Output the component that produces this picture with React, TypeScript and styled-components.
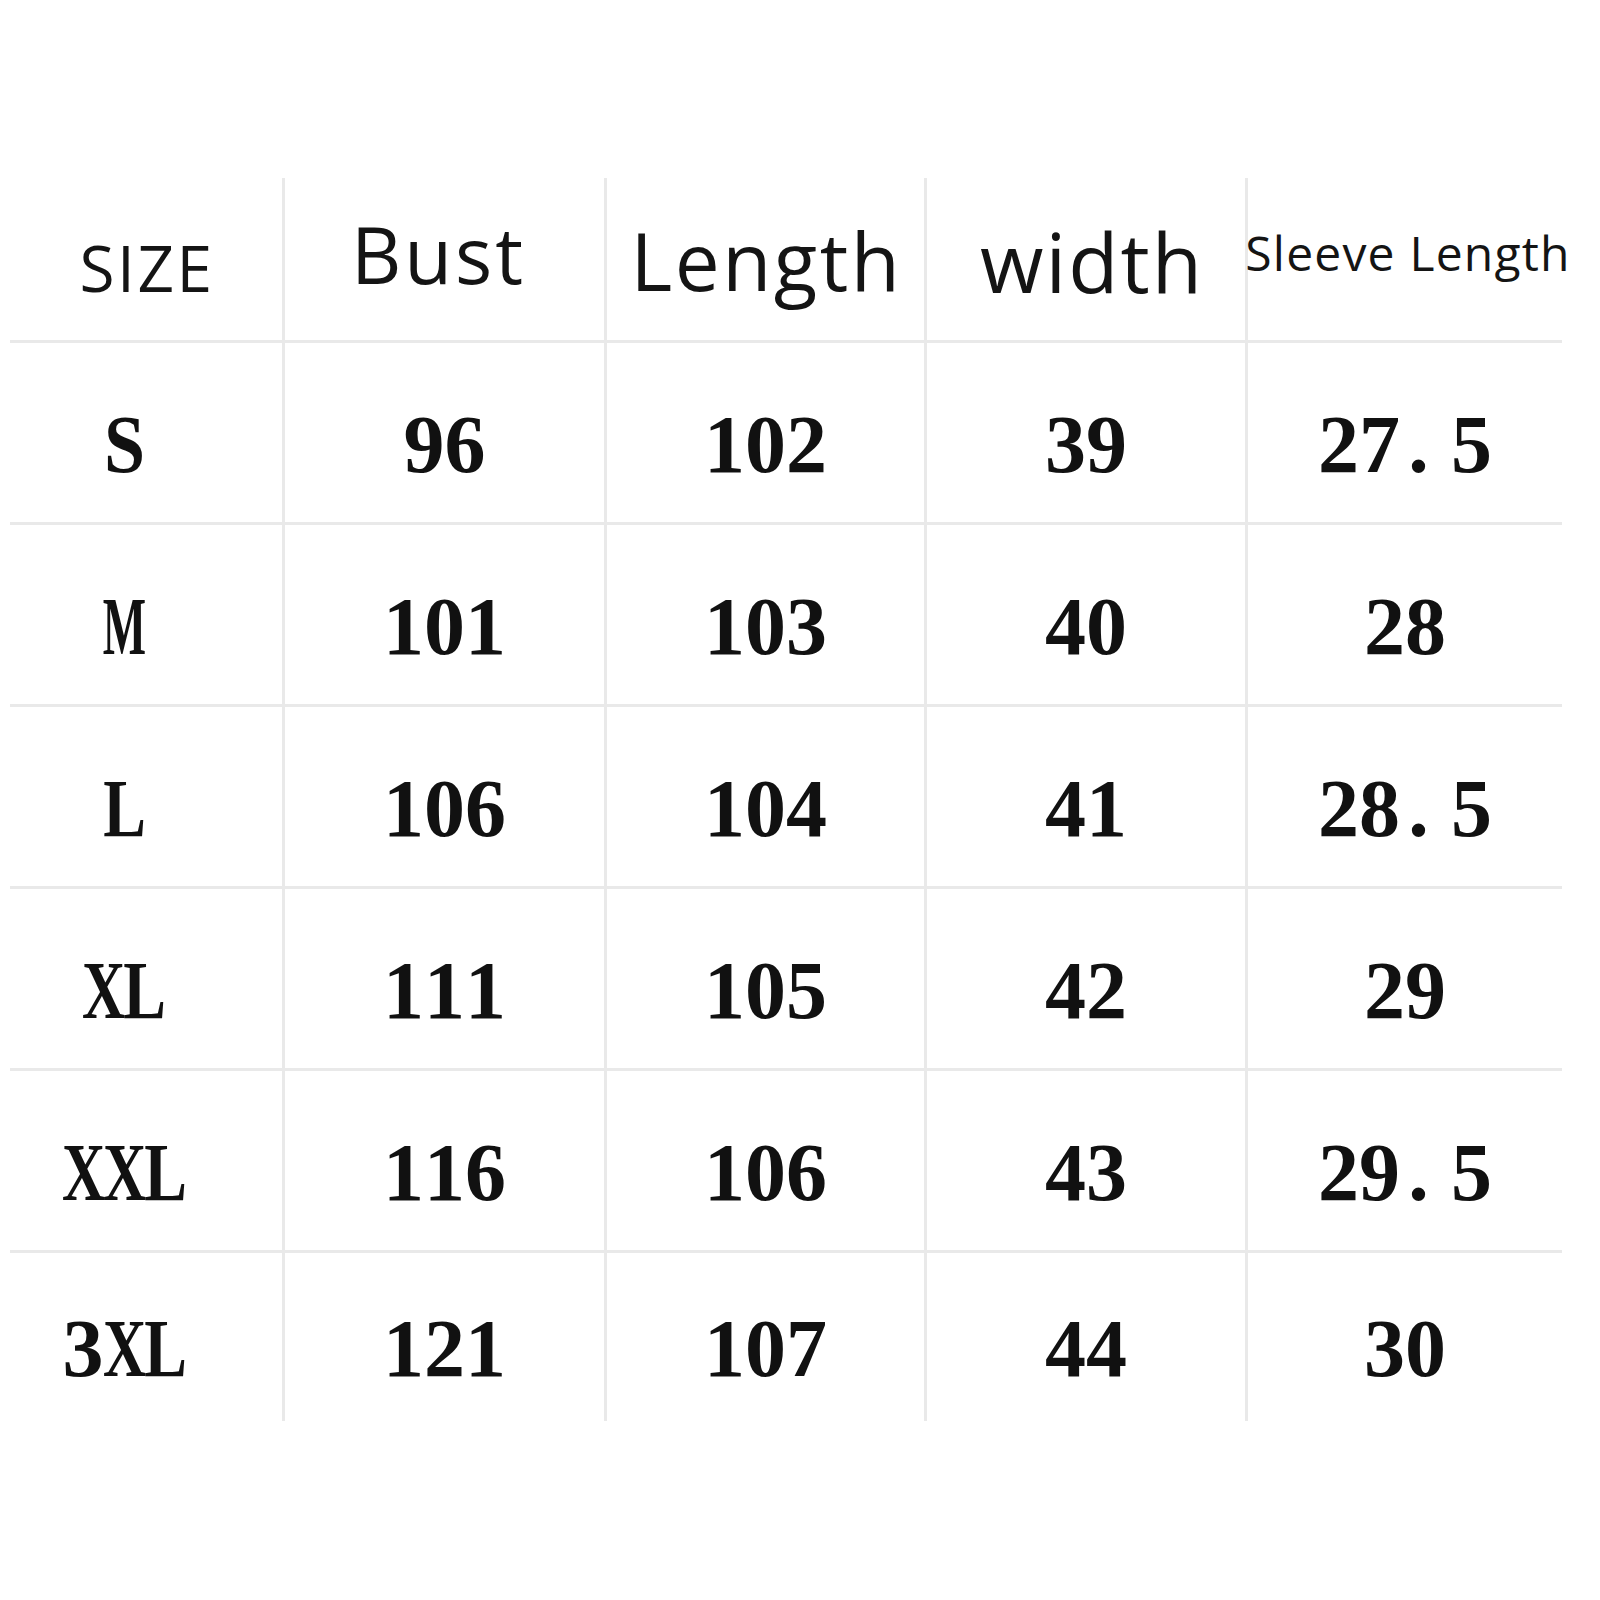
import styled, { createGlobalStyle } from 'styled-components';

const GlobalStyle = createGlobalStyle`
  html, body {
    margin: 0;
    padding: 0;
    background: #ffffff;
  }
`;

const Page = styled.div`
  width: 1600px;
  min-height: 1600px;
  padding-top: 178px;
  padding-left: 10px;
  box-sizing: border-box;
  background: #ffffff;
`;

const Grid = styled.div`
  display: grid;
  grid-template-columns: 275px 322px 320px 321px 314px;
  grid-template-rows: 165px repeat(5, 182px) 168px;
  width: 1552px;
`;

const Cell = styled.div<{ $lastCol: boolean; $lastRow: boolean }>`
  display: flex;
  align-items: center;
  justify-content: center;
  box-sizing: border-box;
  min-width: 0;
  border-right: ${(p) => (p.$lastCol ? 'none' : '3px solid #e9e9e9')};
  border-bottom: ${(p) => (p.$lastRow ? 'none' : '3px solid #e9e9e9')};
`;

// shift: vertical nudge (px, + = down), nudge: horizontal nudge (px, + = right)
const HeadCell = styled(Cell)<{ $size: number; $shift: number; $nudge: number; $spacing: number }>`
  font-family: "Open Sans", "Noto Sans", sans-serif;
  font-size: ${(p) => p.$size}px;
  letter-spacing: ${(p) => p.$spacing}px;
  color: #141414;
  white-space: nowrap;
  padding-top: ${(p) => (p.$shift > 0 ? p.$shift * 2 : 0)}px;
  padding-bottom: ${(p) => (p.$shift < 0 ? -p.$shift * 2 : 0)}px;
  padding-left: ${(p) => (p.$nudge > 0 ? p.$nudge * 2 : 0)}px;
  padding-right: ${(p) => (p.$nudge < 0 ? -p.$nudge * 2 : 0)}px;
`;

const DataCell = styled(Cell)<{ $first: boolean }>`
  font-family: "Liberation Serif", "Times New Roman", serif;
  font-weight: 700;
  font-size: 82px;
  color: #111111;
  padding-top: 24px;
  padding-right: ${(p) => (p.$first ? 44 : 0)}px;
`;

// every character sits in a half-em box, like the half-width glyphs of the original
const Glyph = styled.span<{ $squeeze: number; $dot: boolean }>`
  display: inline-flex;
  justify-content: ${(p) => (p.$dot ? 'flex-start' : 'center')};
  box-sizing: border-box;
  width: ${(p) => (p.$dot ? 0.62 : 0.5)}em;
  padding-left: ${(p) => (p.$dot ? 0.1 : 0)}em;
  transform: scaleX(${(p) => p.$squeeze});
`;

const squeeze: Record<string, number> = { M: 0.56, X: 0.73, L: 0.78, S: 0.9 };

function MonoText({ text }: { text: string }) {
  return (
    <>
      {text.split('').map((ch, i) => (
        <Glyph key={i} $squeeze={squeeze[ch] ?? 1} $dot={ch === '.'}>{ch}</Glyph>
      ))}
    </>
  );
}

const headers = [
  { label: 'SIZE', size: 64, shift: 8, nudge: 1, spacing: 2.4 },
  { label: 'Bust', size: 78, shift: -5, nudge: -6, spacing: 3 },
  { label: 'Length', size: 80, shift: 0, nudge: 1, spacing: 2.5 },
  { label: 'width', size: 82, shift: 2, nudge: 6, spacing: 2 },
  { label: 'Sleeve Length', size: 48, shift: -7, nudge: 3, spacing: 1.2 },
];

const rows = [
  ['S', '96', '102', '39', '27.5'],
  ['M', '101', '103', '40', '28'],
  ['L', '106', '104', '41', '28.5'],
  ['XL', '111', '105', '42', '29'],
  ['XXL', '116', '106', '43', '29.5'],
  ['3XL', '121', '107', '44', '30'],
];

export default function App() {
  return (
    <>
      <GlobalStyle />
      <Page>
        <Grid>
          {headers.map((h, c) => (
            <HeadCell
              key={h.label}
              $lastCol={c === 4}
              $lastRow={false}
              $size={h.size}
              $shift={h.shift}
              $nudge={h.nudge}
              $spacing={h.spacing}
            >
              {h.label}
            </HeadCell>
          ))}
          {rows.map((row, r) =>
            row.map((val, c) => (
              <DataCell key={`${r}-${c}`} $lastCol={c === 4} $lastRow={r === rows.length - 1} $first={c === 0}>
                <MonoText text={val} />
              </DataCell>
            ))
          )}
        </Grid>
      </Page>
    </>
  );
}
